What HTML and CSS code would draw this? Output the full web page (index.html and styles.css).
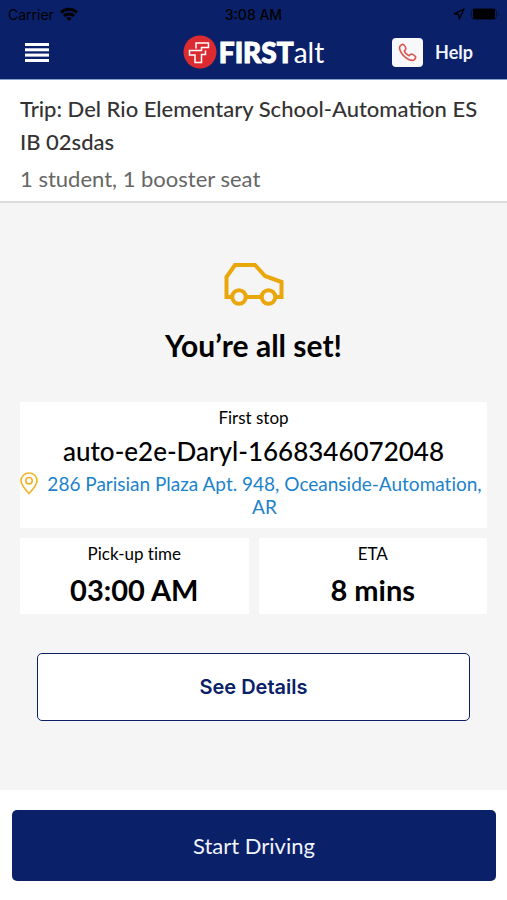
FILE: index.html
```
<!DOCTYPE html>
<html lang="en">
<head>
    <meta charset="UTF-8">
    <meta name="viewport" content="width=device-width, initial-scale=1.0">
    <title>FIRSTalt - Trip</title>
    <link rel="stylesheet" href="styles.css">
</head>
<body>
    <header class="topbar">
        <!-- Phone status bar -->
        <div class="status">
            <div class="carrier">
                <span>Carrier</span>
                <svg width="18" height="14" viewBox="0 0 18 14" fill="none" stroke="#000" stroke-width="3">
                    <path d="M1 5.5a11.5 11.5 0 0 1 16 0"/>
                    <path d="M4 9a7.2 7.2 0 0 1 10 0"/>
                    <path d="M9 14 6.4 11.3a3.8 3.8 0 0 1 5.2 0z" fill="#000" stroke="none"/>
                </svg>
            </div>
            <span class="clock">3:08 AM</span>
            <div class="battery">
                <svg width="12" height="12" viewBox="0 0 12 12" fill="none" stroke="#000" stroke-width="1.3" stroke-linejoin="round">
                    <path d="M11 1 1 5.8l4.6.7.7 4.5z"/>
                </svg>
                <svg width="28" height="12" viewBox="0 0 28 12">
                    <rect x="0.5" y="0.5" width="25" height="11" rx="3" fill="none" stroke="#06113d"/>
                    <rect x="2" y="1" width="22" height="10" rx="1" fill="#000"/>
                    <path d="M27 4v4q1-.5 1-2T27 4z" fill="#06113d"/>
                </svg>
            </div>
        </div>

        <div class="nav">
            <button type="button" class="menu" aria-label="Menu">
                <svg width="24" height="19" viewBox="0 0 24 19" fill="#fff">
                    <rect y="0" width="24" height="3"/>
                    <rect y="5.300" width="24" height="3"/>
                    <rect y="10.600" width="24" height="3"/>
                    <rect y="16" width="24" height="3"/>
                </svg>
            </button>
            <div class="logo">
                <svg width="34" height="34" viewBox="0 0 34 34">
                    <circle cx="17" cy="17" r="16.500" fill="#dc2b30"/>
                    <path d="M13 13.500V8H25.500V12.500H18.500V15.500H6.500V20H12V27.500H18.500V19.500H22.500V15.500" fill="none" stroke="#fff" stroke-width="1.500"/>
                </svg>
                <span class="logo-text"><b>FIRST</b>alt</span>
            </div>
            <button type="button" class="help">
                <span class="help-icon">
                    <svg width="19" height="19" viewBox="0 0 24 24" fill="none" stroke="#d9534f" stroke-width="2" stroke-linejoin="round">
                        <path d="M3 3.500Q5 1 7.300 2.200Q9.500 4 10 7Q10 8.500 8 10Q9 14 14 16Q15.500 14 17 14Q20 14.500 22 17Q23 19 20.500 21.200Q18 23 13 20.500Q6 17 3 10Q1 6 3 3.500z"/>
                    </svg>
                </span>
                Help
            </button>
        </div>
    </header>

    <section class="trip">
        <h1>Trip: Del Rio Elementary School-Automation ES IB 02sdas</h1>
        <p>1 student, 1 booster seat</p>
    </section>

    <main>
        <svg class="car" width="60" height="44" viewBox="0 0 60 44" fill="none" stroke="#eaa70c" stroke-width="4">
            <path d="M8 35H2.500V15L11 3H31L41 14L57.500 20V35H52M22 35H37"/>
            <circle cx="15" cy="35" r="6.800"/>
            <circle cx="44.500" cy="35" r="6.800"/>
        </svg>
        <h2>You’re all set!</h2>

        <div class="cards">
            <div class="card stop">
                <span class="label">First stop</span>
                <strong class="name">auto-e2e-Daryl-1668346072048</strong>
                <div class="address">
                    <svg width="18" height="23" viewBox="0 0 18 23" fill="none" stroke="#f0b52c" stroke-width="1.700">
                        <path d="M9 21.500Q1 13 1 8.700a8 7.700 0 0 1 16 0Q17 13 9 21.500z"/>
                        <circle cx="9" cy="8.700" r="3.200"/>
                    </svg>
                    <a href="#">286 Parisian Plaza Apt. 948, Oceanside-Automation, AR</a>
                </div>
            </div>
            <div class="card">
                <span class="label">Pick-up time</span>
                <strong class="value">03:00 AM</strong>
            </div>
            <div class="card">
                <span class="label">ETA</span>
                <strong class="value">8 mins</strong>
            </div>
        </div>

        <button type="button" class="details">See Details</button>
    </main>

    <footer>
        <button type="button" class="start">Start Driving</button>
    </footer>
</body>
</html>
```
FILE: styles.css
```
* {
    box-sizing: border-box;
}
body {
    display: flex;
    flex-direction: column;
    min-height: 100vh;
    margin: 0;
    font-family: Lato, "Liberation Sans", sans-serif;
    color: #000;
    background: #fff;
}
h1, h2, p {
    margin: 0;
}
button {
    padding: 0;
    border: none;
    background: none;
    font-family: inherit;
    cursor: pointer;
}
svg {
    display: block;
    flex-shrink: 0;
}

/* top bar */
.topbar {
    background: #0a2068;
    border-bottom: 1px solid #8aa0cc;
}
.status {
    display: grid;
    grid-template-columns: 1fr auto 1fr;
    align-items: center;
    height: 28px;
    padding: 0 8px;
    font-family: Inter, sans-serif;
    font-size: 14px;
}
.carrier, .battery {
    display: flex;
    align-items: center;
    gap: 6px;
}
.clock {
    font-weight: 500;
}
.battery {
    justify-content: flex-end;
}
.nav {
    display: grid;
    grid-template-columns: 1fr auto 1fr;
    align-items: center;
    height: 51px;
    padding: 0 25px 3px;
}
.menu {
    justify-self: start;
}
.logo {
    display: flex;
    align-items: center;
    gap: 2px;
    color: #fff;
}
.logo-text {
    font-size: 28px;
    line-height: 34px;
}
.logo-text b {
    font-weight: 900;
    -webkit-text-stroke: 1px #fff;
}
.help {
    display: flex;
    align-items: center;
    justify-self: end;
    gap: 12px;
    margin-right: 9px;
    color: #f0f4ff;
    font-size: 18px;
    font-weight: 700;
}
.help-icon {
    padding: 5px 6px;
    border-radius: 4px;
    background: #f8f8fa;
}

/* trip summary */
.trip {
    padding: 12px 20px 5px;
    border-bottom: 2px solid #dcdcdc;
}
.trip h1 {
    color: #333;
    font-size: 22px;
    font-weight: 500;
    line-height: 33px;
}
.trip p {
    color: #666;
    font-size: 22px;
    line-height: 34px;
    padding-top: 4px;
}

/* content */
main {
    display: flex;
    flex: 1;
    flex-direction: column;
    align-items: center;
    padding: 59px 20px 20px;
    background: #f5f5f5;
    text-align: center;
}
h2 {
    margin: 18px 0 36px;
    font-size: 30px;
    font-weight: 700;
    line-height: 42px;
}
.cards {
    display: grid;
    grid-template-columns: 1fr 1fr;
    gap: 10px;
    width: 100%;
    font-variant-ligatures: none;
}
.card {
    display: flex;
    flex-direction: column;
    padding-top: 4px;
    background: #fff;
}
.stop {
    grid-column: span 2;
    padding-bottom: 10px;
}
.label {
    font-size: 17px;
    line-height: 24px;
}
.name {
    font-size: 26px;
    font-weight: 500;
    line-height: 42px;
}
.address {
    display: flex;
    gap: 4px;
}
.address a {
    flex: 1;
    color: #1c82cc;
    font-size: 19px;
    line-height: 23px;
    text-decoration: none;
}
.value {
    font-size: 29px;
    font-weight: 700;
    line-height: 48px;
}
.details {
    width: calc(100% - 34px);
    height: 68px;
    margin-top: 39px;
    border: 1px solid #0a2068;
    border-radius: 5px;
    background: #fff;
    color: #0a2068;
    font-family: Inter, sans-serif;
    font-size: 20px;
    font-weight: 600;
}

/* bottom action */
footer {
    padding: 20px 11px 19px 12px;
}
.start {
    width: 100%;
    height: 71px;
    border-radius: 5px;
    background: #0a2068;
    color: #f0f4ff;
    font-size: 22px;
}
```
